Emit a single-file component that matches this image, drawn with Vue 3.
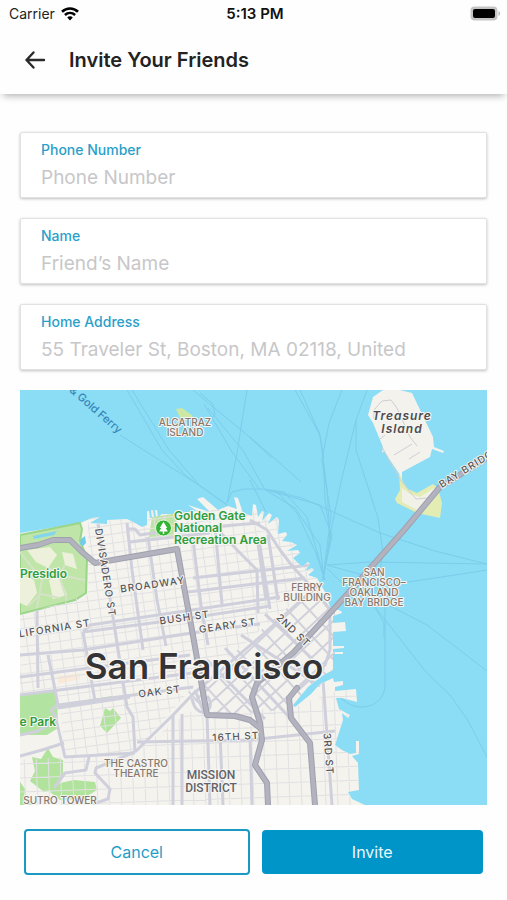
<template>
  <div class="screen">
    <div class="status-bar">
      <div class="carrier">
        <span>Carrier</span>
        <svg width="18" height="14" viewBox="0 0 18 14" aria-hidden="true">
          <path d="M1 4.8C5.6.4 12.4.4 17 4.8" fill="none" stroke="#000" stroke-width="2.6" />
          <path d="M3.9 8c3-2.8 7.2-2.8 10.2 0" fill="none" stroke="#000" stroke-width="2.5" />
          <path d="M6.2 10.4c1.6-1.5 4-1.5 5.6 0L9 13.4z" />
        </svg>
      </div>
      <span class="time">5:13 PM</span>
      <div class="battery">
        <svg width="31" height="15" viewBox="0 0 31 15" aria-hidden="true">
          <rect x="0.5" y="0.5" width="27" height="14" rx="4" fill="#c4c4c4" />
          <rect x="3" y="3" width="22" height="9" rx="2" />
          <path d="M28.5 5c2.2.8 2.2 4.2 0 5z" fill="#bbb" />
        </svg>
      </div>
    </div>

    <header class="header">
      <button class="back" type="button" aria-label="Back">
        <svg width="22" height="20" viewBox="0 0 22 20" aria-hidden="true">
          <path d="M20 10H2.500M9.500 2.500L2.500 10l7 7.500" fill="none" stroke="#2a2a2a" stroke-width="2.400" stroke-linecap="round" stroke-linejoin="round" />
        </svg>
      </button>
      <h1>Invite Your Friends</h1>
    </header>

    <form class="form" @submit.prevent>
      <div v-for="field in fields" :key="field.id" class="field">
        <label :for="field.id">{{ field.label }}</label>
        <input :id="field.id" v-model="field.value" :type="field.type" :placeholder="field.placeholder" />
      </div>

      <svg class="map" viewBox="0 0 467 415" role="img" aria-label="Map of San Francisco">
        <defs>
          <clipPath id="land"><path :d="coast" /></clipPath>
          <clipPath id="north"><path d="M68 120H260L300 190L173 297L115 362L45 367L38 300L0 305V225L68 205z" /></clipPath>
          <clipPath id="soma"><path d="M300 190L315 215V280L272 318L245 322L187 325L168 302z" /></clipPath>
          <clipPath id="mission"><path d="M0 370L115 362L168 322L272 318L345 290V415H0z" /></clipPath>
        </defs>

        <rect width="467" height="415" fill="#8bdcf5" />

        <!-- ferry routes -->
        <g fill="none" stroke="#7bcdea" stroke-width="1">
          <path v-for="d in ferries" :key="d" :d="d" />
        </g>

        <!-- land -->
        <path :d="coast" fill="#f4f3ee" />
        <path d="M156 19l6-1 11 8-4 3-9-1z" fill="#cde8a5" />
        <path d="M353 7L363 0H380L392 3L413 47L414 57L424 61L423 63L412 59L410 67L382 82L382 90L378 82L364 61L362 63L363 57L353 33L348 25z" fill="#f3f2ed" />
        <path d="M379 82L383 92L388 99L397 103L413 94L418 98L422 113L420 128L397 123L377 113L375 109L380 100z" fill="#e2ecb3" />
        <path d="M382 98L390 104L400 107L414 98L419 103L407 117L397 120L382 112z" fill="#f1f1e8" />
        <path d="M354 29V20L362 11L371 10L377 18L390 47L397 56M360 49L365 45M362 57L381 91L396 109L408 108M374 65L392 54M389 69L400 62" fill="none" stroke="#cfcfd3" stroke-width="1" />

        <!-- parks -->
        <path d="M0 145L60 133L62 139L60 151L67 168L66 203L55 210L0 224z" fill="#bfe6a8" stroke="#9ad58a" stroke-width="2" />
        <path d="M7 160L30 157L37 165L28 178L16 172zM0 184L14 190L17 203L7 216L0 213zM42 162L53 164L57 179L45 175zM29 190L39 185L47 205L33 209z" fill="#edf1dc" />
        <path d="M0 162L22 190L17 218M28 178L44 186L65 190M45 175L39 185L47 211M8 216L21 204L40 208" fill="none" stroke="#d5e2c7" stroke-width="2" />
        <path d="M13 146L37 141L34 145L14 149z" fill="#83d5ed" />
        <path d="M61 149L65 146L66 153L63 156L60 154z" fill="#71ccef" />
        <path d="M132 127L153 124L157 130L153 146L129 147z" fill="#bfe3a5" />
        <path d="M0 305L37 300L38 338L27 345H0z" fill="#b3e3a0" />
        <path d="M38 315L92 306V309L38 318z" fill="#abe08f" />
        <path d="M85 318L90 321L93 318L101 328L87 343L80 336z" fill="#b1e39d" />
        <path d="M12 367L21 369L28 358L33 367L43 370V387L34 400L24 402L10 391L15 381zM0 392L5 399L4 409L14 415H0zM40 393L54 390L75 392L77 400L62 409L40 410L30 402z" fill="#b1e39d" />
        <path d="M38 286L60 283V289L38 294z" fill="#fae9d8" />

        <!-- streets -->
        <g clip-path="url(#land)" fill="none" stroke-linejoin="round">
          <g stroke="#e1e1e3" stroke-width="1">
            <g clip-path="url(#north)"><path :d="northGrid" transform="rotate(-8 170 220)" /></g>
            <g clip-path="url(#mission)"><path :d="missionGrid" transform="rotate(-2 170 360)" /></g>
          </g>
          <g clip-path="url(#soma)"><path :d="somaGrid" transform="rotate(-43 250 260)" stroke="#d0d1db" stroke-width="2" /></g>
          <g stroke="#cfd0dc" stroke-width="3">
            <path v-for="d in avenues" :key="d" :d="d" />
          </g>
        </g>
        <g fill="none" stroke-linejoin="round" stroke-linecap="round">
          <g stroke="#a0a1af" stroke-width="6"><path v-for="d in highways" :key="d" :d="d" /></g>
          <g stroke="#b2b3bf" stroke-width="4"><path v-for="d in highways" :key="d" :d="d" /></g>
        </g>

        <!-- national park marker -->
        <circle cx="143.5" cy="138" r="8" fill="#35b435" stroke="#e9f7e4" stroke-width="1" />
        <path d="M143.5 131.8L147.2 138h-1.4l2 3.5h-3.6v2.500h-1.400v-2.500h-3.600l2-3.500h-1.400z" fill="#fff" />

        <!-- labels -->
        <text
          v-for="item in labels"
          :key="item.lines[0]"
          :class="['label', item.kind]"
          :transform="`translate(${item.x} ${item.y}) rotate(${item.angle || 0})`"
        >
          <tspan v-for="(line, i) in item.lines" :key="line" x="0" :y="i * (item.step || 0)">{{ line }}</tspan>
        </text>
      </svg>

      <div class="actions">
        <button class="cancel" type="button">Cancel</button>
        <button class="invite" type="submit">Invite</button>
      </div>
    </form>
  </div>
</template>

<script setup>
import { ref } from 'vue';

const fields = ref([
  { id: 'phone', label: 'Phone Number', type: 'tel', placeholder: 'Phone Number', value: '' },
  { id: 'name', label: 'Name', type: 'text', placeholder: 'Friend’s Name', value: '' },
  { id: 'address', label: 'Home Address', type: 'text', placeholder: '55 Traveler St, Boston, MA 02118, United', value: '' },
]);

const coast =
  'M0 143L30 138L60 133L72 128L80 127L70 133L87 134V130L107 129L115 133L122 137L127 135L127 121L129 121L130 128L132 128L131 120L133 120L134 127L136 127L135 120L137 120L138 127L142 124L153 124L177 121L168 115L190 122L177 109L183 107L198 120L208 116L217 119L214 107L218 108L223 123L232 126L233 114L236 115L238 127L242 121L244 122L242 131L249 123L252 125L248 134L257 127L259 130L258 144L266 142L267 145L262 151L271 152L277 155L267 161L278 160L280 163L273 168L282 177L288 172L290 174L285 181L292 178L294 180L288 185L297 188L305 202L310 217L321 221L322 223L313 226V233L325 232L326 241L313 242V256L324 256V258L313 259V262L323 262V264L313 264V280L302 286L288 297L273 315L275 317L291 304L300 294L313 288L314 292L323 291V295L315 297V301L336 299L337 312L322 308L316 308L319 319L330 325L328 328L322 323L323 330L315 355L322 360L330 364L336 363V351H339V364L332 366L338 373L339 400L328 402L332 409L345 415H0z';

const highways = [
  'M0 158L18 155L33 150L50 150L62 162L75 173L157 159L172 240L187 325L215 326L230 330L240 338',
  'M467 68L420 97L385 139L322 210L273 263L237 293L232 307L240 333L242 350L235 375L247 393L248 415',
  'M277 298L269 308L271 328L290 353L295 415',
];

const avenues = [
  'M0 265L63 260L172 243L240 234',
  'M63 242L70 235L172 220L260 207',
  'M63 242L170 228L250 216',
  'M63 242L67 265L75 311',
  'M0 287L170 265',
  'M0 305L172 283',
  'M38 315L173 297',
  'M38 318L110 307',
  'M31 320L38 315M31 320L35 325L45 367L115 363',
  'M0 366L22 360L44 353',
  'M78 134L93 227L107 317L113 327L115 362',
  'M17 220L18 298M28 265L38 315',
  'M107 133L112 180L123 260M107 139L115 139L120 145L139 142',
  'M128 147L137 210L146 256',
  'M110 152L190 143M190 137L240 133',
  'M173 150L181 215L188 255M195 137L202 214',
  'M200 142L220 163L237 180L238 223',
  'M173 188L300 174M168 202L285 188',
  'M239 150L250 219M248 145L258 210M238 153L246 210',
  'M0 345L18 341L32 333M115 362L153 325L173 304L240 247L297 196',
  'M153 325V415M162 324V415M187 325L190 415M200 343L203 415',
  'M117 352L230 350L315 341',
  'M303 290L312 415M230 345L232 415',
  'M230 130L247 140L260 160L273 177L297 203L310 220V260L305 275L278 300',
  'M175 300L182 318L187 325M172 308C176 333 199 320 187 306',
  'M187 270L245 329M205 258L270 328M221 245L300 296M245 224L304 280',
  'M70 415L88 409L90 399L75 383L76 378L115 362M69 367L66 380L45 383L34 398',
];

const ferries = [
  'M100 45L182 97L208 116',
  'M107 0L142 60L166 86L180 96',
  'M112 0L149 60L180 96L206 114',
  'M188 18L224 62L244 98',
  'M184 14L212 62L240 100',
  'M173 0L192 16L226 44L252 68',
  'M230 47L262 75L281 92M230 90L246 122',
  'M227 0L217 63L207 113L212 102L224 99H244',
  'M275 0L300 45L307 99L310 150L303 190',
  'M280 0L299 42L303 62L305 110L311 150',
  'M322 0L309 33L302 70L311 125L303 188',
  'M347 0L336 30L321 92L310 145L303 190',
  'M336 30V60L358 128L363 162L360 180',
  'M244 99L282 108L360 143L415 161L467 174',
  'M244 99L264 102L287 127L305 190',
  'M244 99L275 118L300 155L304 190',
  'M250 101L300 115L312 145L303 188',
  'M258 103L277 123L296 163L303 185',
  'M307 175L350 172L467 174M307 175L375 194L448 183L467 180',
  'M307 178L325 196M186 33L195 25L193 14L180 3',
  'M365 217V297C363 317 337 325 320 307',
  'M355 217L364 233V248M355 217L406 282L430 305L447 329L467 367',
  'M370 216L407 235L467 281',
];

const labels = [
  { lines: ['& Gold Ferry'], kind: 'ferry end', x: 98, y: 44, angle: 41 },
  { lines: ['ALCATRAZ', 'ISLAND'], kind: 'place', x: 165, y: 36, step: 10 },
  { lines: ['Treasure', 'Island'], kind: 'island', x: 382, y: 30, step: 13 },
  { lines: ['BAY BRIDGE'], kind: 'road', x: 451, y: 80, angle: -32 },
  { lines: ['Golden Gate', 'National', 'Recreation Area'], kind: 'park start', x: 154, y: 130, step: 12 },
  { lines: ['Presidio'], kind: 'park start', x: 0, y: 188 },
  { lines: ['Golden Gate Park'], kind: 'park end', x: 36, y: 336 },
  { lines: ['DIVISADERO ST'], kind: 'road', x: 82, y: 183, angle: 81 },
  { lines: ['BROADWAY'], kind: 'road', x: 133, y: 198, angle: -8 },
  { lines: ['CALIFORNIA ST'], kind: 'road end', x: 71, y: 236, angle: -9 },
  { lines: ['BUSH ST'], kind: 'road', x: 165, y: 231, angle: -8 },
  { lines: ['GEARY ST'], kind: 'road', x: 208, y: 239, angle: -8 },
  { lines: ['OAK ST'], kind: 'road', x: 140, y: 305, angle: -7 },
  { lines: ['16TH ST'], kind: 'road', x: 216, y: 350, angle: -3 },
  { lines: ['2ND ST'], kind: 'road', x: 271, y: 243, angle: 44 },
  { lines: ['3RD ST'], kind: 'road', x: 305, y: 364, angle: 86 },
  { lines: ['FERRY', 'BUILDING'], kind: 'place', x: 287, y: 201, step: 10 },
  { lines: ['SAN', 'FRANCISCO–', 'OAKLAND', 'BAY BRIDGE'], kind: 'place', x: 354, y: 186, step: 10 },
  { lines: ['San Francisco'], kind: 'city', x: 184, y: 289 },
  { lines: ['THE CASTRO', 'THEATRE'], kind: 'place', x: 116, y: 377, step: 10 },
  { lines: ['MISSION', 'DISTRICT'], kind: 'district', x: 191, y: 389, step: 13 },
  { lines: ['SUTRO TOWER'], kind: 'place', x: 40, y: 414 },
];

// evenly spaced lines over a box, crossing both ways
function makeGrid(x, y, w, h, stepX, stepY) {
  let d = '';
  for (let i = x; i <= x + w; i += stepX) d += `M${i} ${y}V${y + h}`;
  for (let j = y; j <= y + h; j += stepY) d += `M${x} ${j}H${x + w}`;
  return d;
}

const northGrid = makeGrid(-40, 80, 400, 340, 11, 9);
const missionGrid = makeGrid(-20, 270, 400, 180, 12, 14);
const somaGrid = makeGrid(130, 150, 240, 220, 16, 12);
</script>

<style scoped>
.screen {
  min-height: 100vh;
  background: #fefefe;
  font-family: Inter, "Liberation Sans", sans-serif;
  color: #222;
}

.status-bar {
  display: grid;
  grid-template-columns: 1fr auto 1fr;
  align-items: center;
  height: 27px;
  padding: 0 6px 0 9px;
  font-size: 14px;
  color: #222;
}

.carrier {
  display: flex;
  align-items: center;
  gap: 6px;
}

.time {
  font-size: 15px;
  font-weight: 600;
  color: #111;
}

.battery {
  display: flex;
  justify-content: flex-end;
}

.header {
  display: flex;
  align-items: center;
  gap: 23px;
  height: 67px;
  padding: 0 24px 2px;
  box-sizing: border-box;
  box-shadow: 0 5px 7px -3px rgba(0, 0, 0, 0.3);
}

.back {
  display: flex;
  padding: 0;
  border: none;
  background: none;
  cursor: pointer;
}

h1 {
  margin: 0;
  font-size: 20px;
  font-weight: 600;
}

.form {
  display: flex;
  flex-direction: column;
  gap: 20px;
  padding: 38px 20px 24px;
}

.field {
  display: flex;
  flex-direction: column;
  height: 66px;
  padding: 8px 20px 0;
  box-sizing: border-box;
  border: 1px solid #e2e2e2;
  border-radius: 2px;
  background: #fff;
  box-shadow: 0 1px 3px rgba(0, 0, 0, 0.25);
}

.field label {
  font-size: 14px;
  font-weight: 500;
  line-height: 18px;
  color: #2a9fc9;
}

.field input {
  width: 100%;
  height: 36px;
  padding: 0;
  border: none;
  outline: none;
  background: none;
  font-family: inherit;
  font-size: 19px;
  color: #222;
}

.field input::placeholder {
  color: #c7c7c9;
  opacity: 1;
}

.map {
  display: block;
  width: 100%;
  height: auto;
}

.label {
  text-anchor: middle;
  paint-order: stroke;
  stroke: #f6f5f1;
  stroke-width: 2px;
  stroke-linejoin: round;
}

.place {
  font-size: 10px;
  font-weight: 500;
  fill: #85796f;
}

.road {
  font-size: 10px;
  font-weight: 500;
  letter-spacing: 1px;
  fill: #55555b;
}

.park {
  font-size: 12px;
  font-weight: 600;
  fill: #2f9e3d;
}

.ferry {
  font-size: 11px;
  font-weight: 500;
  fill: #3586b8;
  stroke: none;
}

.island {
  font-size: 12px;
  font-weight: 600;
  font-style: italic;
  letter-spacing: 1px;
  fill: #4c4c50;
}

.district {
  font-size: 12px;
  font-weight: 500;
  font-family: Roboto, sans-serif;
  fill: #626268;
}

.city {
  font-size: 35px;
  font-weight: 600;
  fill: #343436;
  stroke-width: 3px;
}

.start {
  text-anchor: start;
}

.end {
  text-anchor: end;
}

.actions {
  display: flex;
  align-items: center;
  gap: 12px;
  padding: 4px 4px 0;
}

.actions button {
  flex: 1;
  height: 44px;
  border: none;
  border-radius: 4px;
  font-family: inherit;
  font-size: 16px;
  cursor: pointer;
}

.actions .cancel {
  height: 46px;
  border: 2px solid #1a9ac3;
  background: #fff;
  color: #1f9dc8;
}

.actions .invite {
  background: #0095c8;
  color: #e8f7fc;
}
</style>

<style>
body {
  margin: 0;
}
</style>
